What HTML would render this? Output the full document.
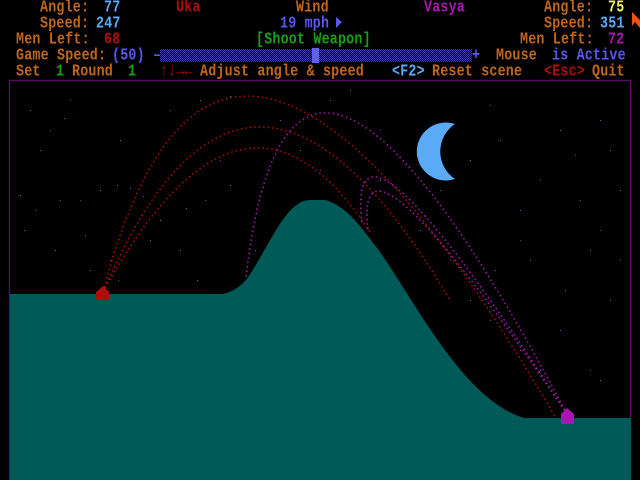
<!DOCTYPE html>
<html><head><style>
html,body{margin:0;padding:0;background:#000;width:640px;height:480px;overflow:hidden}
.t{position:absolute;font-family:"Liberation Mono",monospace;font-size:13.33px;line-height:16px;white-space:pre;font-weight:bold;transform:scaleY(1.25);transform-origin:0 4px;letter-spacing:0.2px}
.o{color:#c2671a}.b{color:#5aaaf8}.r{color:#b00c0c}.m{color:#a818b0}.y{color:#f6f05a}.g{color:#18a018}.v{color:#5858f0}
</style></head><body>
<svg width="640" height="480" style="position:absolute;left:0;top:0">
<defs><pattern id="dp" width="2" height="2" patternUnits="userSpaceOnUse"><rect width="1" height="1" fill="#3c3ca8"/><rect x="1" y="1" width="1" height="1" fill="#3c3ca8"/></pattern></defs>
<rect x="160" y="49" width="312" height="13" fill="url(#dp)"/>
<rect x="312" y="48" width="7" height="15" fill="#6060f0"/>
<rect x="9.5" y="80.5" width="621" height="400" fill="none" stroke="#5a0a5a" stroke-width="1.5"/>
<g fill="#5858e0">
<rect x="30" y="110" width="1" height="1"/><rect x="60" y="200" width="1" height="1"/><rect x="120" y="140" width="1" height="1"/><rect x="150" y="240" width="1" height="1"/><rect x="200" y="100" width="1" height="1"/><rect x="180" y="250" width="1" height="1"/><rect x="280" y="120" width="1" height="1"/><rect x="350" y="90" width="1" height="1"/><rect x="500" y="140" width="1" height="1"/><rect x="580" y="200" width="1" height="1"/><rect x="600" y="120" width="1" height="1"/><rect x="530" y="260" width="1" height="1"/><rect x="470" y="300" width="1" height="1"/><rect x="90" y="270" width="1" height="1"/><rect x="40" y="150" width="1" height="1"/><rect x="420" y="230" width="1" height="1"/><rect x="560" y="330" width="1" height="1"/><rect x="610" y="300" width="1" height="1"/><rect x="130" y="188" width="1" height="1"/><rect x="255" y="250" width="1" height="1"/>
<rect x="24" y="230" width="1" height="1"/><rect x="64" y="118" width="1" height="1"/><rect x="143" y="196" width="1" height="1"/><rect x="186" y="208" width="1" height="1"/><rect x="230" y="96" width="1" height="1"/><rect x="300" y="150" width="1" height="1"/><rect x="380" y="180" width="1" height="1"/><rect x="520" y="210" width="1" height="1"/><rect x="590" y="250" width="1" height="1"/><rect x="620" y="190" width="1" height="1"/><rect x="565" y="290" width="1" height="1"/><rect x="495" y="270" width="1" height="1"/><rect x="440" y="190" width="1" height="1"/><rect x="600" y="380" width="1" height="1"/><rect x="85" y="235" width="1" height="1"/></g>
<g fill="#a018b0">
<rect x="50" y="130" width="1" height="1"/><rect x="80" y="200" width="1" height="1"/><rect x="220" y="160" width="1" height="1"/><rect x="110" y="260" width="1" height="1"/><rect x="380" y="130" width="1" height="1"/><rect x="540" y="180" width="1" height="1"/><rect x="600" y="230" width="1" height="1"/><rect x="450" y="260" width="1" height="1"/><rect x="170" y="110" width="1" height="1"/><rect x="320" y="170" width="1" height="1"/><rect x="490" y="320" width="1" height="1"/><rect x="590" y="370" width="1" height="1"/><rect x="70" y="100" width="1" height="1"/>
<rect x="36" y="210" width="1" height="1"/><rect x="118" y="280" width="1" height="1"/><rect x="205" y="200" width="1" height="1"/><rect x="490" y="105" width="1" height="1"/><rect x="575" y="155" width="1" height="1"/><rect x="520" y="240" width="1" height="1"/><rect x="620" y="260" width="1" height="1"/></g>
<g fill="#b06018">
<rect x="20" y="195" width="1" height="1"/><rect x="100" y="190" width="1" height="1"/><rect x="160" y="220" width="1" height="1"/><rect x="230" y="185" width="1" height="1"/><rect x="330" y="100" width="1" height="1"/><rect x="470" y="160" width="1" height="1"/><rect x="560" y="130" width="1" height="1"/><rect x="610" y="150" width="1" height="1"/><rect x="520" y="350" width="1" height="1"/><rect x="197" y="280" width="1" height="1"/><rect x="117" y="185" width="1" height="1"/><rect x="55" y="250" width="1" height="1"/><rect x="540" y="370" width="1" height="1"/></g>
<path d="M10,294 L222,294 Q235,292 246,280 C268,250 285,200 310,200 L325,200 C345,205 360,225 380,252 C420,310 465,400 524,418 L631,418 L631,480 L10,480 Z" fill="#005a58"/>
<g fill="none" stroke-width="1.5" stroke-dasharray="1.5 3">
<path d="M103,292 Q220,-155 556,418" stroke="#b00c0c"/>
<path d="M103,292 Q247,-42 450,300" stroke="#b00c0c"/>
<path d="M103,292 Q243,38 370,232" stroke="#b00c0c"/>
<path d="M567,414 Q290,-110 246,278" stroke="#a818b0"/>
<path d="M567,414 Q345,71 362,224" stroke="#a818b0"/>
<path d="M567,414 Q352,98 368,230" stroke="#a818b0"/>
</g>
<path d="M455,124 A29,29 0 1 0 455,179 A33,33 0 0 1 455,124 Z" fill="#5aaaf8"/>
<path d="M96,300 L96,292 L103,286 L109,292 L109,300 Z" fill="#b00c0c"/>
<path d="M561,424 L561,414 L567,408 L574,414 L574,424 Z" fill="#a818b0"/>
<path d="M632,12 L632,26 L635,22 L640,28 L640,20 Z" fill="#f05010"/>
<polygon points="336,17 336,28 342,22" fill="#5858f0"/>
</svg>
<div class="t o" style="left:40px;top:0">Angle:</div><div class="t b" style="left:104px;top:0">77</div>
<div class="t r" style="left:176px;top:0">Uka</div>
<div class="t o" style="left:296px;top:0">Wind</div>
<div class="t m" style="left:424px;top:0">Vasya</div>
<div class="t o" style="left:544px;top:0">Angle:</div><div class="t y" style="left:608px;top:0">75</div>
<div class="t o" style="left:40px;top:16px">Speed:</div><div class="t b" style="left:96px;top:16px">247</div>
<div class="t v" style="left:280px;top:16px">19 mph</div>
<div class="t o" style="left:544px;top:16px">Speed:</div><div class="t b" style="left:600px;top:16px">351</div>
<div class="t o" style="left:16px;top:32px">Men Left:</div><div class="t r" style="left:104px;top:32px">68</div>
<div class="t g" style="left:256px;top:32px">[Shoot Weapon]</div>
<div class="t o" style="left:520px;top:32px">Men Left:</div><div class="t m" style="left:608px;top:32px">72</div>
<div class="t o" style="left:16px;top:48px">Game Speed:</div><div class="t v" style="left:112px;top:48px">(50) –</div>
<div class="t v" style="left:472px;top:48px">+</div>
<div class="t o" style="left:496px;top:48px">Mouse</div><div class="t v" style="left:552px;top:48px">is Active</div>
<div class="t o" style="left:16px;top:64px">Set</div><div class="t g" style="left:56px;top:64px">1</div><div class="t o" style="left:72px;top:64px">Round</div><div class="t g" style="left:128px;top:64px">1</div>
<div class="t r" style="left:160px;top:64px">↑↓→←</div><div class="t o" style="left:200px;top:64px">Adjust angle &amp; speed</div>
<div class="t b" style="left:392px;top:64px">&lt;F2&gt;</div><div class="t o" style="left:432px;top:64px">Reset scene</div>
<div class="t r" style="left:544px;top:64px">&lt;Esc&gt;</div><div class="t o" style="left:592px;top:64px">Quit</div>
</body></html>
